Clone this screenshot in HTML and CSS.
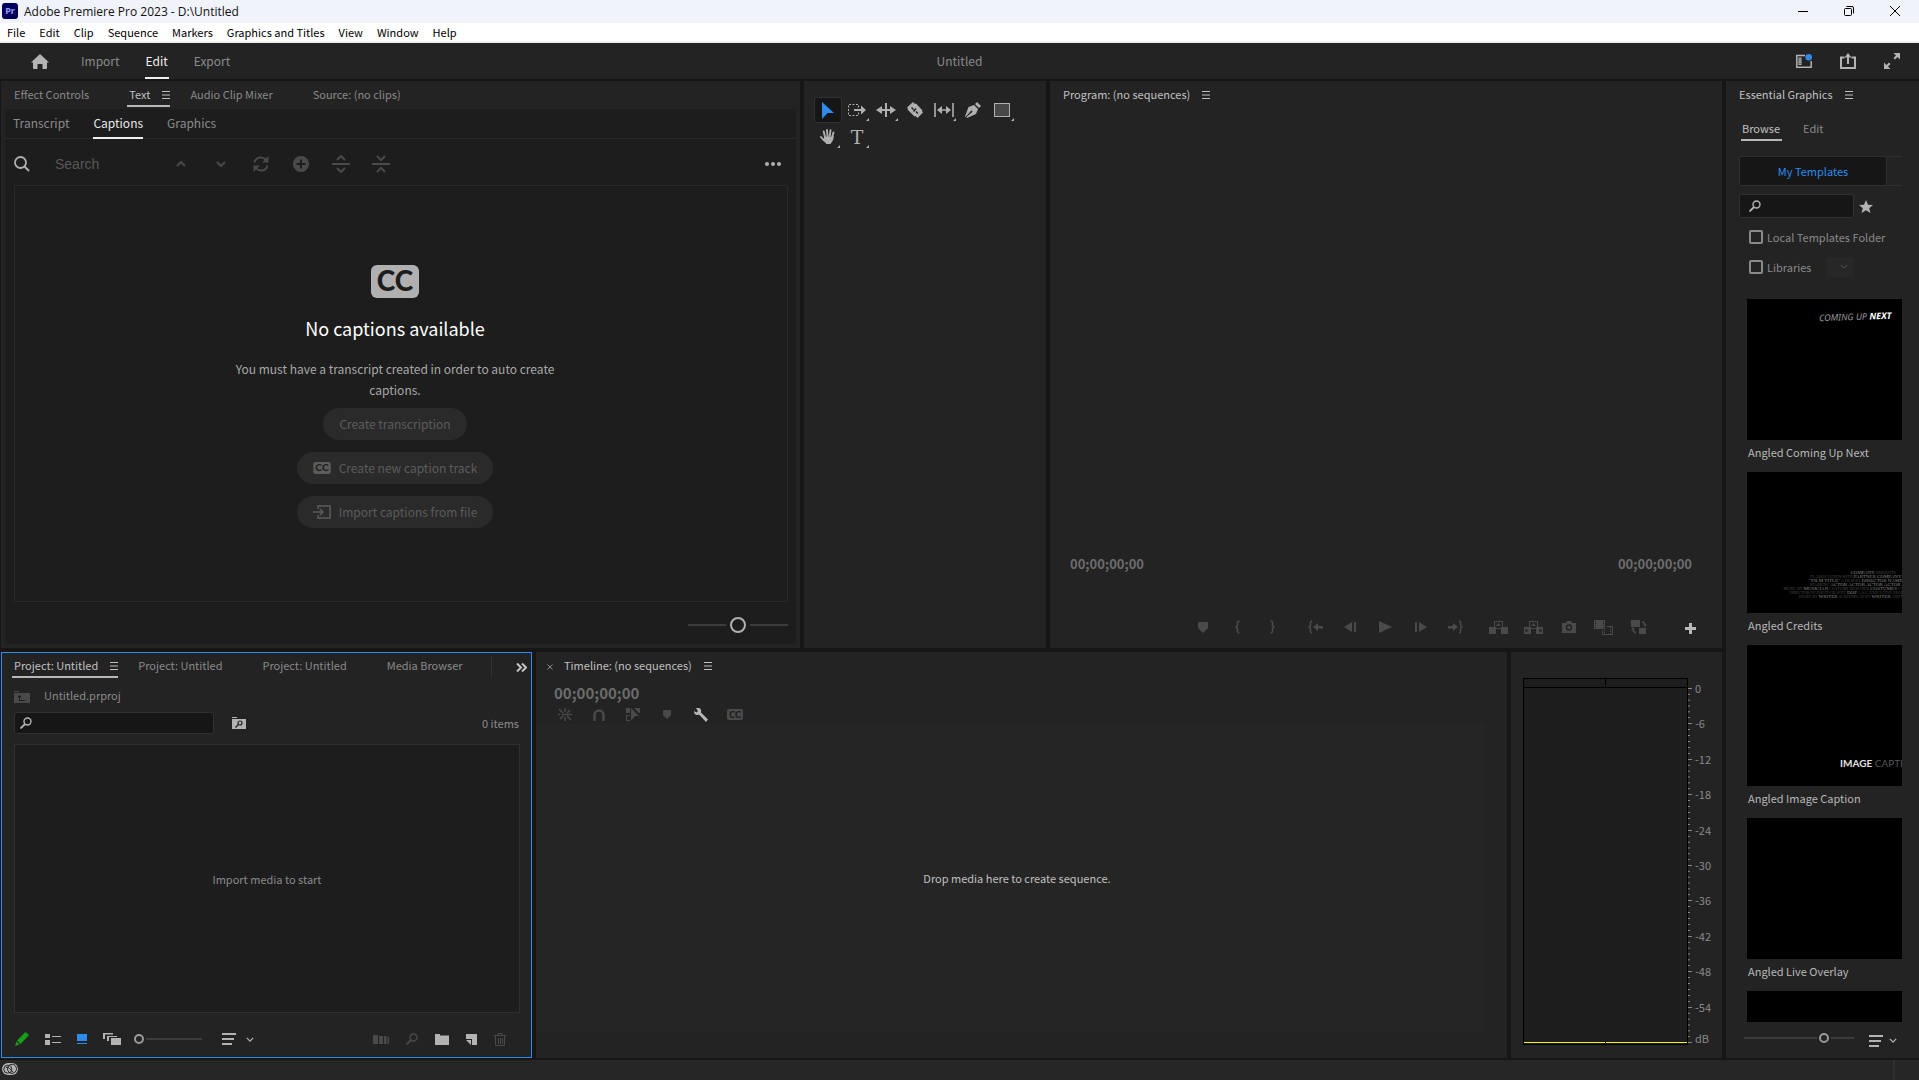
FILE: index.html
```html
<!DOCTYPE html>
<html lang="en">

<head>
  <meta charset="UTF-8">
  <meta name="viewport" content="width=device-width, initial-scale=1.0">
  <title>Adobe Premiere Pro 2023</title>
  <link rel="stylesheet" href="styles.css">
</head>

<body>
  <!-- shared icons -->
  <svg class="sprite" aria-hidden="true">
    <symbol id="i-menu" viewBox="0 0 8 8"><path d="M0 .5h8M0 4h8M0 7.5h8" stroke="currentColor" /></symbol>
    <symbol id="i-down" viewBox="0 0 10 6"><path d="M1 1l4 4 4-4" fill="none" stroke="currentColor" stroke-width="1.5" /></symbol>
    <symbol id="i-find" viewBox="0 0 12 12"><circle cx="7.5" cy="4.5" r="3.5" fill="none" stroke="currentColor" stroke-width="1.4" /><path d="M5 7l-4.5 4.5" stroke="currentColor" stroke-width="1.8" /></symbol>
    <symbol id="i-sort" viewBox="0 0 14 12"><path d="M0 1h14M0 6h12M0 11h10" stroke="currentColor" stroke-width="2" /></symbol>
    <symbol id="i-cc" viewBox="0 0 48 33"><rect width="48" height="33" rx="6" fill="currentColor" /><text x="24" y="26" class="cc-text" text-anchor="middle">CC</text></symbol>
    <symbol id="i-marker" viewBox="0 0 10 11"><path d="M0 1q0-1 1-1h8q1 0 1 1v5l-5 5-5-5z" fill="currentColor" /></symbol>
    <symbol id="i-corner" viewBox="0 0 3 3"><path d="M3 0v3H0z" fill="currentColor" /></symbol>
  </svg>

  <div class="app">
    <div class="titlebar">
      <svg width="16" height="16" viewBox="0 0 16 16"><rect width="16" height="16" rx="3" fill="#00005b" /><text x="8" y="11" class="pr-text" text-anchor="middle">Pr</text></svg>
      <span class="window-title">Adobe Premiere Pro 2023 - D:\Untitled</span>
      <div class="window-buttons">
        <button aria-label="Minimize"><svg width="10" height="10" viewBox="0 0 10 10"><path d="M0 5.5h10" stroke="#000" /></svg></button>
        <button aria-label="Restore"><svg width="10" height="10" viewBox="0 0 10 10" fill="none" stroke="#000"><rect x=".5" y="2.5" width="7" height="7" rx="1" /><path d="M2.5.5H8Q9.5.5 9.5 2v5.5" /></svg></button>
        <button aria-label="Close"><svg width="10" height="10" viewBox="0 0 10 10"><path d="M0 0l10 10M10 0L0 10" stroke="#000" /></svg></button>
      </div>
    </div>

    <nav class="menubar">
      <a href="#">File</a>
      <a href="#">Edit</a>
      <a href="#">Clip</a>
      <a href="#">Sequence</a>
      <a href="#">Markers</a>
      <a href="#">Graphics and Titles</a>
      <a href="#">View</a>
      <a href="#">Window</a>
      <a href="#">Help</a>
    </nav>

    <header class="header">
      <div class="header-left">
        <button class="home" aria-label="Home"><svg width="18" height="15" viewBox="0 0 18 15"><path d="M9 0l9 8.5h-2V14q0 1-1 1h-3.5v-5h-5v5H3q-1 0-1-1V8.5H0z" fill="#b3b3b3" /></svg></button>
        <a class="mode" href="#">Import</a>
        <a class="mode active" href="#">Edit</a>
        <a class="mode" href="#">Export</a>
      </div>
      <div class="header-title">Untitled</div>
      <div class="header-right">
        <button aria-label="Workspaces"><svg width="16" height="14" viewBox="0 0 16 14"><path d="M9 1.5H.8v11.700h14.400V7" fill="none" stroke="#b3b3b3" stroke-width="1.500" /><rect x="2.500" y="3.500" width="3" height="7.500" fill="#b3b3b3" /><path d="M3.500 5h1M3.500 7.200h1M3.500 9.500h1" stroke="#232323" /><circle cx="12.700" cy="3.300" r="3.300" fill="#2d8ceb" /></svg></button>
        <button aria-label="Quick export"><svg width="16" height="16" viewBox="0 0 16 16" fill="none" stroke="#b3b3b3" stroke-width="2"><path d="M4.500 4.500H1V15h14V4.500h-3.500M8 11V2" /><path d="M4.500 4.500L8 0l3.500 4.500z" fill="#b3b3b3" stroke="none" /></svg></button>
        <button aria-label="Fullscreen"><svg width="16" height="16" viewBox="0 0 16 16" fill="#b3b3b3"><path d="M9.500 0H16v6.500L13.500 4 11 6.500 9.500 5 12 2.500zM0 16V9.500L2.500 12 5 9.500 6.500 11 4 13.500 6.500 16z" /></svg></button>
      </div>
    </header>

    <main class="workspace">
      <div class="docks">
        <div class="row row-top">
          <!-- text panel -->
          <section class="panel text-panel">
            <div class="tabs">
              <a class="tab" href="#">Effect Controls<svg><use href="#i-menu" /></svg></a>
              <a class="tab active" href="#">Text<svg><use href="#i-menu" /></svg></a>
              <a class="tab" href="#">Audio Clip Mixer<svg><use href="#i-menu" /></svg></a>
              <a class="tab" href="#">Source: (no clips)<svg><use href="#i-menu" /></svg></a>
            </div>
            <div class="text-body">
              <div class="subtabs">
                <a class="subtab" href="#">Transcript</a>
                <a class="subtab active" href="#">Captions</a>
                <a class="subtab" href="#">Graphics</a>
              </div>
              <div class="caption-tools">
                <svg width="16" height="16" viewBox="0 0 16 16" fill="none" stroke="#b0b0b0"><circle cx="6.500" cy="6.500" r="5.500" stroke-width="1.800" /><path d="M10.500 10.500L15 15" stroke-width="2" /></svg>
                <input class="caption-search" type="text" placeholder="Search" aria-label="Search captions">
                <button aria-label="Previous"><svg width="10" height="6" viewBox="0 0 10 6"><path d="M1 5l4-4 4 4" fill="none" stroke="currentColor" stroke-width="2" /></svg></button>
                <button aria-label="Next"><svg width="10" height="6" viewBox="0 0 10 6"><path d="M1 1l4 4 4-4" fill="none" stroke="currentColor" stroke-width="2" /></svg></button>
                <button aria-label="Refresh"><svg width="16" height="16" viewBox="0 0 16 16" fill="none" stroke="currentColor" stroke-width="2"><path d="M1.500 6.500A6.500 6.500 0 0 1 13 4M14.500 9.500A6.500 6.500 0 0 1 3 12" /><path d="M15.500 0v6.500H9zM.500 16V9.500H7z" fill="currentColor" stroke="none" /></svg></button>
                <button aria-label="Add"><svg width="16" height="16" viewBox="0 0 16 16"><circle cx="8" cy="8" r="8" fill="currentColor" /><path d="M8 3.500v9M3.500 8h9" stroke="#1d1d1d" stroke-width="2" /></svg></button>
                <button aria-label="Split"><svg width="18" height="18" viewBox="0 0 18 18" fill="none" stroke="currentColor" stroke-width="2"><path d="M0 9h18M5 5l4-4 4 4M5 13l4 4 4-4" /></svg></button>
                <button aria-label="Merge"><svg width="18" height="18" viewBox="0 0 18 18" fill="none" stroke="currentColor" stroke-width="2"><path d="M0 9h18M5 1l4 4 4-4M5 17l4-4 4 4" /></svg></button>
                <button class="more" aria-label="More"><svg width="16" height="4" viewBox="0 0 16 4" fill="#b0b0b0"><circle cx="2" cy="2" r="2" /><circle cx="8" cy="2" r="2" /><circle cx="14" cy="2" r="2" /></svg></button>
              </div>
              <div class="captions-box">
                <svg class="cc-big" width="48" height="33"><use href="#i-cc" /></svg>
                <h2>No captions available</h2>
                <p>You must have a transcript created in order to auto create captions.</p>
                <div class="caption-buttons">
                  <button>Create transcription</button>
                  <button><svg width="18" height="12"><use href="#i-cc" /></svg>Create new caption track</button>
                  <button><svg width="18" height="14" viewBox="0 0 18 14" fill="none" stroke="currentColor" stroke-width="1.500"><path d="M5 4V1h12v12H5v-3M0 7h10M7 4l3 3-3 3" /></svg>Import captions from file</button>
                </div>
              </div>
              <div class="zoom-row">
                <input class="slider slider-lg" type="range" value="50" aria-label="Text size">
              </div>
            </div>
          </section>

          <!-- tools -->
          <section class="panel tools-panel">
            <div class="tools">
              <button class="tool active" aria-label="Selection"><svg width="12" height="17" viewBox="0 0 12 17"><path d="M0 0l12 11H5.500L0 17z" fill="#2d8ceb" /></svg></button>
              <button class="tool" aria-label="Track select"><svg width="18" height="12" viewBox="0 0 18 12"><path d="M1 .500h9.500v11H.500V.500z" fill="none" stroke="currentColor" stroke-dasharray="2 1.500" /><path d="M6 5h7V1.500L18 6l-5 4.500V7H6z" fill="currentColor" /></svg><svg class="corner"><use href="#i-corner" /></svg></button>
              <button class="tool" aria-label="Ripple edit"><svg width="20" height="14" viewBox="0 0 20 14" fill="currentColor"><path d="M9 0h2v14H9zM0 7l6-4v3h3v2H6v3zM20 7l-6-4v3h-3v2h3v3z" /></svg><svg class="corner"><use href="#i-corner" /></svg></button>
              <button class="tool" aria-label="Razor"><svg width="16" height="16" viewBox="0 0 16 16"><path d="M6 0l2 2 1-.500 6.500 7-.500 1 1 1L10.500 16l-2-2-1 .500-7-7 .500-1-1-1z" fill="currentColor" /><path d="M4.500 5.500l2 2M9 9.500l2 2M6.500 9.500L9 6.500" stroke="#232323" stroke-width="1.500" /></svg></button>
              <button class="tool" aria-label="Slip"><svg width="20" height="14" viewBox="0 0 20 14"><path d="M1 0v14M19 0v14M5 7h10" stroke="currentColor" stroke-width="1.600" /><path d="M3 7l5-4v8zM17 7l-5-4v8z" fill="currentColor" /></svg><svg class="corner"><use href="#i-corner" /></svg></button>
              <button class="tool" aria-label="Pen"><svg width="16" height="16" viewBox="0 0 16 16"><path d="M12 0l4 4-2 2-4-4zM9 3l4 4-2 5-9 4-.700-.700L6 11l1-.500.500-1.500-1.500-.500-1 1.500L.500 15 0 14.500 3.500 5z" fill="currentColor" /></svg></button>
              <button class="tool" aria-label="Rectangle"><svg width="16" height="14" viewBox="0 0 16 14"><rect x=".500" y=".500" width="15" height="13" fill="#484848" stroke="currentColor" /></svg><svg class="corner"><use href="#i-corner" /></svg></button>
              <button class="tool" aria-label="Hand"><svg width="16" height="16" viewBox="0 0 16 16" fill="none" stroke="currentColor" stroke-width="1.900" stroke-linecap="round"><path d="M5 8L3.700 2.500M7.500 7L7 1M9.800 7l.700-5.700M12 8.500l1.500-5M4 11.500L1 8" /><path d="M4.500 8Q8 6.500 12 8l2-1q0 4-3.500 8h-4L3 11z" fill="currentColor" stroke="none" /></svg><svg class="corner"><use href="#i-corner" /></svg></button>
              <button class="tool" aria-label="Type"><span class="type-text">T</span><svg class="corner"><use href="#i-corner" /></svg></button>
            </div>
          </section>

          <!-- program monitor -->
          <section class="panel program-panel">
            <div class="tabs">
              <a class="tab current" href="#">Program: (no sequences)<svg><use href="#i-menu" /></svg></a>
            </div>
            <div class="screen"></div>
            <div class="timecodes">
              <span>00;00;00;00</span>
              <span>00;00;00;00</span>
            </div>
            <div class="transport">
              <button aria-label="Add marker"><svg width="10" height="11"><use href="#i-marker" /></svg></button>
              <button aria-label="Mark in"><svg width="5" height="14" viewBox="0 0 5 14" fill="none" stroke="currentColor" stroke-width="1.500"><path d="M4.500 1Q2.500 1 2.500 3v2.500L1 7l1.500 1.500V11q0 2 2 2" /></svg></button>
              <button aria-label="Mark out"><svg width="5" height="14" viewBox="0 0 5 14" fill="none" stroke="currentColor" stroke-width="1.500"><path d="M.500 1q2 0 2 2v2.500L4 7 2.500 8.500V11q0 2-2 2" /></svg></button>
              <button class="wide" aria-label="Go to in"><svg width="15" height="14" viewBox="0 0 15 14"><path d="M4 1Q2.500 1 2.500 3v2.500L1 7l1.500 1.500V11q0 2 1.500 2" fill="none" stroke="currentColor" stroke-width="1.500" /><path d="M5 7l5-4v3h5v2.500h-5V11z" fill="currentColor" /></svg></button>
              <button aria-label="Step back"><svg width="13" height="10" viewBox="0 0 13 10" fill="currentColor"><path d="M0 5l8-5v10zM10 0h2v10h-2z" /></svg></button>
              <button aria-label="Play"><svg width="13" height="12" viewBox="0 0 13 12" fill="currentColor"><path d="M0 0l13 6-13 6z" /></svg></button>
              <button aria-label="Step forward"><svg width="13" height="10" viewBox="0 0 13 10" fill="currentColor"><path d="M13 5L5 0v10zM1 0h2v10H1z" /></svg></button>
              <button aria-label="Go to out"><svg width="15" height="14" viewBox="0 0 15 14"><path d="M11 1q1.500 0 1.500 2v2.500L14 7l-1.500 1.500V11q0 2-1.500 2" fill="none" stroke="currentColor" stroke-width="1.500" /><path d="M10 7L5 3v3H0v2.500h5V11z" fill="currentColor" /></svg></button>
              <button class="wide" aria-label="Lift"><svg width="19" height="13" viewBox="0 0 19 13"><path d="M0 6h7v7H0zM12 6h7v7h-7zM9.500 2L12 5H7z" fill="currentColor" /><path d="M5.500 6V.500h8V6M7 7.500h5" fill="none" stroke="currentColor" /></svg></button>
              <button aria-label="Extract"><svg width="19" height="13" viewBox="0 0 19 13"><path d="M0 6h7v7H0zM12 6h7v7h-7zM9.500 2L12 5H7z" fill="currentColor" /><path d="M5.500 6V.500h8V6M7 7.500h5" fill="none" stroke="currentColor" /><path d="M1.500 7.500l3 2-3 2zM17.500 7.500l-3 2 3 2z" fill="#232323" /></svg></button>
              <button aria-label="Export frame"><svg width="14" height="12" viewBox="0 0 14 12"><path d="M0 2h4l1-2h4l1 2h4v10H0z" fill="currentColor" /><circle cx="7" cy="6.500" r="2.500" fill="none" stroke="#232323" stroke-width="1.400" /></svg></button>
              <button aria-label="Comparison view"><svg width="19" height="15" viewBox="0 0 19 15"><path d="M0 0h11v9H0z" fill="currentColor" /><path d="M1.500 1v8M9.500 1v8" stroke="#232323" stroke-dasharray="1 1" /><path d="M12.500 6.500h6v8h-10v-4" fill="none" stroke="currentColor" /><path d="M10.500 10v4M16.500 7v7" stroke="currentColor" stroke-dasharray="1 1" /></svg></button>
              <button aria-label="Proxies"><svg width="16" height="14" viewBox="0 0 16 14"><path d="M0 0h9v7H0zM8 8h7v6H8z" fill="currentColor" /><path d="M11 2q3 0 3 4M5 12.500q-3 0-3-4" fill="none" stroke="currentColor" stroke-width="1.500" /><path d="M12 4.500h4L14 7zM0 9.500h4L2 7z" fill="currentColor" /></svg></button>
              <button class="add" aria-label="Button editor"><svg width="11" height="11" viewBox="0 0 11 11"><path d="M5.500 0v11M0 5.500h11" stroke="currentColor" stroke-width="3" /></svg></button>
            </div>
          </section>
        </div>

        <div class="row row-bottom">
          <!-- project -->
          <section class="panel project-panel">
            <div class="tabs">
              <a class="tab active" href="#">Project: Untitled<svg><use href="#i-menu" /></svg></a>
              <a class="tab" href="#">Project: Untitled<svg><use href="#i-menu" /></svg></a>
              <a class="tab" href="#">Project: Untitled<svg><use href="#i-menu" /></svg></a>
              <a class="tab" href="#">Media Browser</a>
              <button class="overflow" aria-label="More panels"><svg width="11" height="9" viewBox="0 0 11 9" fill="none" stroke="#c4c4c4" stroke-width="2"><path d="M1 .500l4 4-4 4M6 .500l4 4-4 4" /></svg></button>
            </div>
            <div class="project-path">
              <svg width="16" height="12" viewBox="0 0 16 12"><path d="M0 0h5v1H0zM0 2h16v10H0z" fill="#4a4a4a" /><path d="M5.500 5v4.500H11M3.500 6.500l2-2 2 2" fill="none" stroke="#1d1d1d" /></svg>
              <span>Untitled.prproj</span>
            </div>
            <div class="project-find">
              <label class="find"><svg width="12" height="12"><use href="#i-find" /></svg><input type="text" aria-label="Search project"></label>
              <button aria-label="New search bin"><svg width="14" height="12" viewBox="0 0 14 12"><path d="M0 0h5v1H0zM0 2h14v10H0z" fill="#b3b3b3" /><circle cx="8" cy="6" r="2" fill="none" stroke="#232323" stroke-width="1.200" /><path d="M6.500 7.500l-3 3" stroke="#232323" stroke-width="1.500" /></svg></button>
              <span class="count">0 items</span>
            </div>
            <div class="media-box">Import media to start</div>
            <div class="project-tools">
              <div class="views">
                <button aria-label="Writable"><svg width="14" height="14" viewBox="0 0 14 14" fill="#17a017"><path d="M10.500 0L14 3 5.500 12 2 8.500zM1.500 9.500L4.500 12.500 0 14z" /></svg></button>
                <button aria-label="List view"><svg width="16" height="11" viewBox="0 0 16 11"><path d="M0 0h5v4H0zM0 6h5v5H0z" fill="#b3b3b3" /><path d="M7 2.500h9M7 8.500h9" stroke="#b3b3b3" /></svg></button>
                <button aria-label="Icon view"><svg width="10" height="11" viewBox="0 0 10 11" fill="#2d8ceb"><path d="M0 0h10v7H0z" /><path d="M0 9h10v1H0z" /></svg></button>
                <button aria-label="Freeform view"><svg width="18" height="12" viewBox="0 0 18 12"><path d="M0 0h10v1.500H2V6H0zM4 3h10v1H6v4H4zM8 5h10v7H8z" fill="#b3b3b3" /></svg></button>
              </div>
              <input class="slider slider-project" type="range" value="0" aria-label="Thumbnail size">
              <button class="sort" aria-label="Sort icons"><svg width="14" height="12"><use href="#i-sort" /></svg><svg width="8" height="5"><use href="#i-down" /></svg></button>
              <div class="project-actions">
                <button aria-label="Automate to sequence" disabled><svg width="16" height="9" viewBox="0 0 16 9" fill="#4a4a4a"><path d="M0 0h5v9H0zM6 1h4v8H6zM11 1h2.500v8H11zM14.500 2H16v7h-1.500z" /></svg></button>
                <button aria-label="Find" disabled><svg class="dim" width="12" height="12"><use href="#i-find" /></svg></button>
                <button aria-label="New bin"><svg width="14" height="11" viewBox="0 0 14 11"><path d="M0 0h5v1.500h9V11H0z" fill="#b3b3b3" /></svg></button>
                <button aria-label="New item"><svg width="11" height="11" viewBox="0 0 11 11"><path d="M0 0h11v11H6V5H0z" fill="#b3b3b3" /><path d="M0 6h5v5z" fill="#b3b3b3" /></svg></button>
                <button aria-label="Clear" disabled><svg width="12" height="13" viewBox="0 0 12 13" fill="none" stroke="#4a4a4a"><path d="M0 2.500h12M4 2V.500h4V2M1.500 3v9.500h9V3M4.500 5v6M6.500 5v6M8.500 5v6" /></svg></button>
              </div>
            </div>
          </section>

          <!-- timeline -->
          <section class="panel timeline-panel">
            <div class="tabs">
              <button class="close" aria-label="Close timeline"><svg width="6" height="6" viewBox="0 0 6 6"><path d="M.500.500l5 5M5.500.500l-5 5" stroke="#8a8a8a" /></svg></button>
              <a class="tab current" href="#">Timeline: (no sequences)<svg><use href="#i-menu" /></svg></a>
            </div>
            <div class="timeline-code">00;00;00;00</div>
            <div class="timeline-tools">
              <button aria-label="Insert as nest"><svg width="14" height="13" viewBox="0 0 14 13" fill="none" stroke="currentColor" stroke-width="1.500"><path d="M7 0v4M7 9v4M4 6.500h10M0 6.500h2M1 1l4 4M9 8l4 4M12 2L9 5M5 8l-3 3" /></svg></button>
              <button aria-label="Snap"><svg width="12" height="12" viewBox="0 0 12 12"><path d="M1.500 12V6a4.500 4.500 0 0 1 9 0v6" fill="none" stroke="currentColor" stroke-width="2.500" /></svg></button>
              <button aria-label="Linked selection"><svg width="14" height="13" viewBox="0 0 14 13" fill="currentColor"><path d="M0 0h4v5H0zM5 0l8 8H9l-4 5zM8 0h6v5h-1zM0 7h4v1H1v4h3v1H0z" /></svg></button>
              <button aria-label="Add marker"><svg width="8" height="9"><use href="#i-marker" /></svg></button>
              <button class="on" aria-label="Timeline settings"><svg width="14" height="14" viewBox="0 0 14 14" fill="currentColor"><path d="M2 0q4-1 5 2 .300 1 0 2.500l7 7L12 14 5 6.500Q1.500 8 .200 5 0 4 0 3l2.500 1.500L4 3z" /></svg></button>
              <button aria-label="Caption options"><svg width="16" height="11"><use href="#i-cc" /></svg></button>
            </div>
            <div class="drop-area">Drop media here to create sequence.</div>
          </section>

          <!-- audio meters -->
          <section class="panel meter-panel">
            <div class="meter">
              <div class="clip"><i></i><i></i></div>
              <div class="bars"><i></i><i></i></div>
            </div>
            <div class="scale">
              <div class="step"><span>0</span></div>
              <div class="step"><span>-6</span></div>
              <div class="step"><span>-12</span></div>
              <div class="step"><span>-18</span></div>
              <div class="step"><span>-24</span></div>
              <div class="step"><span>-30</span></div>
              <div class="step"><span>-36</span></div>
              <div class="step"><span>-42</span></div>
              <div class="step"><span>-48</span></div>
              <div class="step"><span>-54</span></div>
              <div class="step last"><span>dB</span></div>
            </div>
          </section>
        </div>
      </div>

      <!-- essential graphics -->
      <aside class="panel graphics-panel">
        <div class="tabs">
          <a class="tab current" href="#">Essential Graphics<svg><use href="#i-menu" /></svg></a>
        </div>
        <div class="graphics-modes">
          <a class="active" href="#">Browse</a>
          <a href="#">Edit</a>
        </div>
        <div class="sources">
          <button class="selected">My Templates</button>
          <button aria-label="Adobe Stock"></button>
        </div>
        <div class="graphics-find">
          <label class="find"><svg width="12" height="12"><use href="#i-find" /></svg><input type="text" aria-label="Search templates"></label>
          <button aria-label="Favorites"><svg width="14" height="13" viewBox="0 0 14 13"><path d="M7 0l2 4.700 5 .300-3.800 3.200L11.500 13 7 10.300 2.500 13l1.300-4.800L0 5l5-.300z" fill="#b3b3b3" /></svg></button>
        </div>
        <div class="filter"><input type="checkbox" id="local"><label for="local">Local Templates Folder</label></div>
        <div class="filter"><input type="checkbox" id="libs"><label for="libs">Libraries</label>
          <span class="lib-select"><select aria-label="Library" disabled></select><svg width="8" height="5"><use href="#i-down" /></svg></span>
        </div>
        <div class="gallery">
          <figure>
            <div class="thumb"><span class="coming">COMING UP <b>NEXT</b></span></div>
            <figcaption>Angled Coming Up Next</figcaption>
          </figure>
          <figure>
            <div class="thumb">
              <div class="credits">
                <p><b>COMPANY</b> PRESENTS</p>
                <p>IN ASSOCIATION WITH <b>PARTNER COMPANY</b> AND <b>ANOTHER</b></p>
                <p><b>"FILM TITLE"</b> A FILM BY <b>DIRECTOR NAME</b> AND <b>ANOTHER</b></p>
                <p>STARRING <b>ACTOR ACTOR ACTOR ACTOR ACTOR ACTOR</b></p>
                <p>MUSIC BY <b>MUSICIAN</b> COSTUME DESIGNER <b>COSTUMES</b> CO-PRODUCER <b>CO-PRODUCER</b></p>
                <p>DIRECTOR OF PHOTOGRAPHY <b>DOP</b> A.S.C. EXECUTIVE PRODUCER <b>PRODUCER PROD</b></p>
                <p>STORY BY <b>WRITER</b> SCREENPLAY BY <b>WRITER</b> AND <b>WRITER</b> DIRECTED BY</p>
              </div>
            </div>
            <figcaption>Angled Credits</figcaption>
          </figure>
          <figure>
            <div class="thumb"><span class="image-caption"><b>IMAGE</b> CAPTION</span></div>
            <figcaption>Angled Image Caption</figcaption>
          </figure>
          <figure>
            <div class="thumb"></div>
            <figcaption>Angled Live Overlay</figcaption>
          </figure>
          <figure>
            <div class="thumb"></div>
          </figure>
        </div>
        <div class="graphics-foot">
          <input class="slider slider-graphics" type="range" value="75" aria-label="Template size">
          <button class="sort" aria-label="Sort templates"><svg width="14" height="12"><use href="#i-sort" /></svg><svg width="8" height="5"><use href="#i-down" /></svg></button>
        </div>
      </aside>
    </main>

    <footer class="statusbar">
      <svg width="16" height="12" viewBox="0 0 16 12"><rect width="16" height="12" rx="6" fill="#b3b3b3" /><g fill="none" stroke="#262626"><circle cx="5.800" cy="6.200" r="4" /><circle cx="10" cy="5.800" r="4.500" /><path d="M4 4.500q2-1 3.500 1L11 9" /></g></svg>
      <span class="status-end"></span>
    </footer>
  </div>
</body>

</html>
```
FILE: styles.css
```css
* {
  box-sizing: border-box;
}

body {
  margin: 0;
  background: #161616;
  color: #8a8a8a;
  font-family: "Noto Sans CJK SC", "Noto Sans", sans-serif;
  font-size: 11px;
  line-height: 16px;
}

a {
  color: inherit;
  text-decoration: none;
}

button {
  display: flex;
  align-items: center;
  justify-content: center;
  padding: 0;
  border: none;
  background: none;
  color: inherit;
  font: inherit;
}

input,
select {
  margin: 0;
  font: inherit;
}

svg {
  display: block;
  flex-shrink: 0;
}

.sprite {
  display: none;
}

.cc-text {
  font: 900 28px Lato, sans-serif;
  fill: #1d1d1d;
}

.pr-text {
  font: bold 9px "Noto Sans", sans-serif;
  fill: #9999ff;
}

.type-text {
  font: 19px/20px "DejaVu Serif", serif;
}

.app {
  display: flex;
  flex-direction: column;
  height: 100vh;
  overflow: hidden;
}

/* window frame */
.titlebar {
  display: flex;
  align-items: center;
  height: 23px;
  padding: 0 19px 2px 2px;
  background: #f0f3f9;
  color: #111;
}

.window-title {
  margin-left: 6px;
  padding-top: 2px;
  font-family: "Open Sans", sans-serif;
  font-size: 12px;
}

.window-buttons {
  display: flex;
  gap: 36px;
  margin-left: auto;
}

.menubar {
  display: flex;
  gap: 14px;
  height: 20px;
  padding: 1px 7px 0;
  border-bottom: 2px solid #f0f0f0;
  background: #fff;
  color: #000;
}

.header {
  display: grid;
  grid-template-columns: 1fr auto 1fr;
  height: 36px;
  background: #232323;
  font-size: 12px;
  line-height: 35px;
}

.header-left {
  display: flex;
  gap: 24px;
  padding-left: 31px;
}

.home {
  margin-right: 7px;
}

.mode {
  height: 36px;
  padding: 0 1px;
}

.mode.active {
  border-bottom: 2px solid #f0f0f0;
  color: #f0f0f0;
}

.header-right {
  display: flex;
  justify-content: flex-end;
  gap: 28px;
  padding-right: 19px;
}

/* docking */
.workspace {
  display: grid;
  grid-template-columns: 1fr 193px;
  gap: 4px;
  flex: 1;
  min-height: 0;
  padding: 2px 0 2px 1px;
}

.docks {
  display: grid;
  grid-template-rows: 567fr 406fr;
  gap: 4px;
  min-height: 0;
}

.row {
  display: grid;
  gap: 4px;
  min-height: 0;
}

.row-top {
  grid-template-columns: 799fr 242fr 672fr;
}

.row-bottom {
  grid-template-columns: 531fr 971fr 211fr;
}

.panel {
  display: flex;
  flex-direction: column;
  min-width: 0;
  min-height: 0;
  background: #232323;
}

.tabs {
  display: flex;
  gap: 16px;
  height: 28px;
  padding: 4px 11px 0;
}

.tab {
  display: flex;
  align-items: center;
  gap: 12px;
  height: 22px;
  padding: 0 0 2px 2px;
  margin-right: 2px;
  border-bottom: 2px solid transparent;
  white-space: nowrap;
}

.tab svg {
  width: 8px;
  height: 8px;
  margin-top: 2px;
  visibility: hidden;
}

.tab.active,
.tab.current {
  color: #c0c0c0;
}

.tab.active {
  border-color: #b8b8b8;
}

.tab.active svg,
.tab.current svg {
  visibility: visible;
}

.slider {
  height: 18px;
  appearance: none;
  background: linear-gradient(#3c3c3c, #3c3c3c) center / 100% 2px no-repeat;
}

.slider::-webkit-slider-thumb {
  appearance: none;
  width: 10px;
  height: 10px;
  border: 2px solid #9a9a9a;
  border-radius: 50%;
  background: #232323;
  box-shadow: 0 0 0 2px #232323;
}

.slider-lg::-webkit-slider-thumb {
  width: 16px;
  height: 16px;
  border-color: #b0b0b0;
  background: #1d1d1d;
  box-shadow: 0 0 0 4px #1d1d1d;
}

.find {
  display: flex;
  align-items: center;
  gap: 6px;
  padding: 0 5px;
  border: 1px solid #303030;
  border-radius: 2px;
  background: #161616;
  color: #b3b3b3;
}

.find input {
  flex: 1;
  min-width: 0;
  padding: 0;
  border: none;
  background: none;
  color: #b3b3b3;
}

/* text panel */
.text-body {
  display: flex;
  flex-direction: column;
  flex: 1;
  min-height: 0;
  margin: 0 4px 4px;
  background: #1d1d1d;
}

.subtabs {
  display: flex;
  gap: 24px;
  height: 30px;
  padding: 0 8px;
  border-bottom: 1px solid #2a2a2a;
  font-size: 12px;
  line-height: 27px;
}

.subtab {
  height: 30px;
}

.subtab.active {
  border-bottom: 2px solid #f0f0f0;
  color: #e8e8e8;
}

.caption-tools {
  display: flex;
  align-items: center;
  height: 46px;
  padding: 3px 15px 0 9px;
  color: #4a4a4a;
}

.caption-tools button {
  width: 40px;
}

.caption-search {
  width: 106px;
  margin-left: 25px;
  padding: 0;
  border: none;
  background: none;
  color: #b0b0b0;
  font: 14px "Liberation Sans", sans-serif;
}

.caption-search::placeholder {
  color: #585858;
}

.caption-tools .more {
  width: 16px;
  margin-left: auto;
}

.captions-box {
  display: flex;
  flex-direction: column;
  align-items: center;
  flex: 1;
  margin: 0 8px 0 9px;
  padding: 79px 12px 0 0;
  border: 1px solid #2a2a2a;
  border-radius: 2px;
}

.cc-big {
  color: #b0b0b0;
}

.captions-box h2 {
  margin: 18px 0;
  color: #fff;
  font-size: 18px;
  font-weight: 400;
  line-height: 24px;
}

.captions-box p {
  width: 330px;
  margin: 0 0 8px;
  color: #a8a8a8;
  font-size: 12px;
  line-height: 21px;
  text-align: center;
}

.caption-buttons {
  display: flex;
  flex-direction: column;
  align-items: center;
  gap: 12px;
}

.caption-buttons button {
  gap: 8px;
  height: 32px;
  padding: 0 16px;
  border-radius: 16px;
  background: #2a2a2a;
  color: #5c5c5c;
  font-size: 12px;
}

.zoom-row {
  display: flex;
  justify-content: flex-end;
  height: 42px;
  padding: 14px 8px 0;
}

.slider-lg {
  width: 100px;
}

/* tools */
.tools {
  display: grid;
  grid-template-columns: repeat(7, 29px);
  grid-auto-rows: 27px;
  padding: 16px 10px;
  color: #b0b0b0;
}

.tool {
  position: relative;
  width: 28px;
  height: 26px;
  border: 1px solid transparent;
  border-radius: 2px;
}

.tool.active {
  border-color: #303030;
  background: #161616;
}

.corner {
  position: absolute;
  right: 1px;
  bottom: 1px;
  width: 3px;
  height: 3px;
}

/* program monitor */
.screen {
  flex: 1;
}

.timecodes {
  display: flex;
  justify-content: space-between;
  padding: 0 30px 0 20px;
  color: #6c6c6c;
  font-size: 13px;
  font-weight: 700;
  line-height: 20px;
}

.transport {
  display: flex;
  align-items: center;
  height: 36px;
  margin: 35px 0 3px 135px;
  color: #4a4a4a;
}

.transport button {
  width: 35px;
}

.transport .wide {
  margin-left: 8px;
}

.transport .add {
  margin: 2px 14px 0 auto;
  color: #b8b8b8;
}

/* project */
.project-panel {
  border: 1px solid #2d8ceb;
}

.project-panel .tabs {
  padding: 3px 0 0 10px;
}

.overflow {
  flex-shrink: 0;
  width: 40px;
  height: 22px;
  margin-left: auto;
  padding-left: 20px;
  border-left: 1px solid #303030;
}

.project-path {
  display: flex;
  align-items: center;
  gap: 14px;
  height: 24px;
  margin-top: 2px;
  padding: 0 12px;
}

.project-path svg {
  margin-top: 3px;
}

.project-find {
  display: flex;
  align-items: center;
  gap: 18px;
  height: 22px;
  margin: 5px 12px 10px;
}

.project-find .find {
  width: 200px;
  height: 22px;
}

.count {
  margin-left: auto;
}

.media-box {
  display: flex;
  align-items: center;
  justify-content: center;
  flex: 1;
  margin: 0 11px 0 12px;
  border: 1px solid #303030;
  background: #1d1d1d;
}

.project-tools {
  display: flex;
  align-items: center;
  gap: 13px;
  height: 44px;
  padding: 8px 25px 0 13px;
}

.views {
  display: flex;
  align-items: center;
  gap: 16px;
}

.slider-project {
  width: 68px;
  margin-right: 7px;
}

.sort {
  gap: 10px;
  color: #b3b3b3;
}

.project-actions {
  display: flex;
  gap: 17px;
  margin-left: auto;
}

.dim {
  color: #4a4a4a;
}

/* timeline */
.timeline-panel .tabs {
  gap: 9px;
}

.close {
  height: 22px;
}

.timeline-code {
  padding: 1px 18px 0;
  color: #6c6c6c;
  font-size: 15px;
  font-weight: 700;
  line-height: 24px;
}

.timeline-tools {
  display: flex;
  align-items: center;
  height: 19px;
  padding-left: 12px;
  color: #4a4a4a;
}

.timeline-tools button {
  width: 34px;
}

.timeline-tools .on {
  color: #b8b8b8;
}

.drop-area {
  display: flex;
  align-items: center;
  justify-content: center;
  flex: 1;
  margin: 0 23px 26px 0;
  padding-left: 14px;
  background: #252525;
  color: #c0c0c0;
}

/* meters */
.meter-panel {
  flex-direction: row;
  padding: 26px 0 13px 12px;
}

.meter {
  display: flex;
  flex-direction: column;
  flex: 1;
  border: 1px solid #000;
  background: #1d1d1d;
}

.clip,
.bars {
  display: flex;
}

.clip {
  height: 9px;
  border-bottom: 1px solid #000;
}

.bars {
  flex: 1;
  padding-bottom: 1px;
}

.clip i,
.bars i {
  flex: 1;
}

.clip i + i {
  border-left: 1px solid #000;
}

.bars i {
  border-bottom: 1px solid #f5f500;
}

.bars i + i {
  margin-left: 1px;
}

.scale {
  display: flex;
  flex-direction: column;
  width: 34px;
  padding: 10px 0 2px;
}

.step {
  flex: 1;
  background: linear-gradient(#8a8a8a 1px, transparent 1px) 0 0 / 2px calc(100% / 6) repeat-y;
}

.step span {
  display: flex;
  align-items: center;
  gap: 3px;
  height: 1px;
  line-height: 1px;
}

.step span::before {
  content: "";
  width: 4px;
  height: 1px;
  background: #8a8a8a;
}

.step.last {
  flex: 0 0 1px;
}

.step.last span {
  align-items: flex-start;
  line-height: 0;
  margin-top: -4px;
}

.step.last span::before {
  margin-top: 4px;
}

/* essential graphics */
.graphics-panel {
  padding-right: 17px;
}

.graphics-modes {
  display: flex;
  gap: 20px;
  margin: 8px 0 0 15px;
}

.graphics-modes a {
  height: 24px;
  padding: 3px 2px 0 1px;
}

.graphics-modes .active {
  border-bottom: 2px solid #b8b8b8;
  color: #c0c0c0;
}

.sources {
  display: flex;
  height: 30px;
  margin: 15px 0 0 13px;
}

.sources button {
  flex: 1;
  border: 1px solid #303030;
  border-right: none;
}

.sources .selected {
  flex: 0 0 148px;
  border-right: 1px solid #303030;
  border-radius: 2px;
  background: #161616;
  color: #2d8ceb;
}

.sources button + button {
  border-left: none;
}

.graphics-find {
  display: flex;
  gap: 5px;
  margin: 8px 0 4px 13px;
}

.graphics-find .find {
  width: 115px;
  height: 24px;
  padding-left: 9px;
}

.filter {
  display: flex;
  align-items: center;
  height: 30px;
  padding-left: 23px;
}

.filter input {
  width: 14px;
  height: 14px;
  margin-right: 4px;
  appearance: none;
  border: 2px solid #8a8a8a;
  border-radius: 2px;
}

.lib-select {
  display: flex;
  position: relative;
  margin-left: 14px;
  color: #454545;
}

.lib-select select {
  width: 28px;
  height: 20px;
  appearance: none;
  border: none;
  border-radius: 2px;
  background: #2a2a2a;
}

.lib-select svg {
  position: absolute;
  top: 7px;
  right: 6px;
}

.gallery {
  flex: 1;
  min-height: 0;
  margin: 17px 0 0 21px;
  overflow: hidden;
}

.gallery figure {
  margin: 0 0 12px;
}

.thumb {
  position: relative;
  height: 141px;
  overflow: hidden;
  background: #000;
}

.gallery figcaption {
  height: 20px;
  padding: 4px 1px 0;
  color: #b8b8b8;
}

.coming {
  position: absolute;
  top: 10px;
  right: 11px;
  color: #999;
  font: italic 9px/16px "Noto Sans", sans-serif;
  rotate: -2deg;
}

.coming b {
  color: #fff;
}

.image-caption {
  position: absolute;
  top: 110px;
  left: 93px;
  color: #555;
  font: 10px/16px Lato, sans-serif;
  white-space: nowrap;
}

.image-caption b {
  color: #e0e0e0;
}

.credits {
  position: absolute;
  top: 99px;
  left: 0;
  width: 252px;
  color: #4a4a4a;
  font: 4px/4px "Liberation Serif", serif;
  text-align: center;
  white-space: nowrap;
}

.credits p {
  height: 4px;
  margin: 0;
}

.credits b {
  color: #888;
  font-size: 5px;
  font-weight: 400;
}

.graphics-foot {
  display: flex;
  align-items: center;
  justify-content: space-between;
  height: 36px;
  padding: 0 5px 4px 18px;
}

.slider-graphics {
  width: 110px;
}

.graphics-foot .sort {
  gap: 6px;
  padding-top: 5px;
}

.statusbar {
  display: flex;
  justify-content: space-between;
  height: 20px;
  padding: 3px 24px 0 2px;
  background: #262626;
}

.status-end {
  width: 2px;
  margin-top: -3px;
  background: #303030;
}
```
